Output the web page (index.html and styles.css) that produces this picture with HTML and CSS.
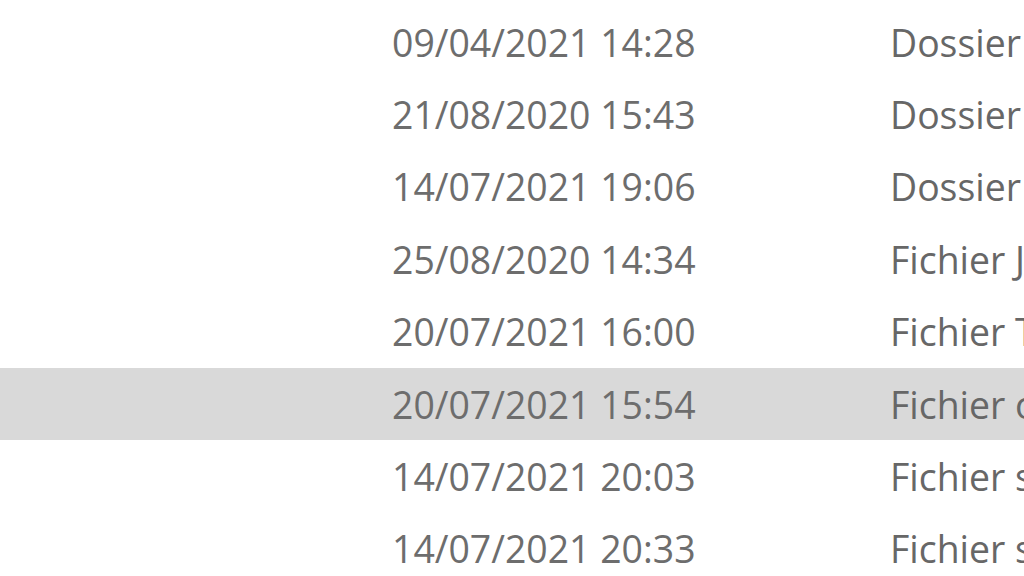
FILE: index.html
```html
<!DOCTYPE html>
<html lang="fr">
<head>
<meta charset="utf-8">
<title>Explorateur</title>
<link rel="stylesheet" href="styles.css">
</head>
<body>
<div class="list">
  <div class="row"><span class="name"></span><span class="date">09/04/2021 14:28</span><span class="type">Dossier de fichiers</span></div>
  <div class="row"><span class="name"></span><span class="date">21/08/2020 15:43</span><span class="type">Dossier de fichiers</span></div>
  <div class="row"><span class="name"></span><span class="date">14/07/2021 19:06</span><span class="type">Dossier de fichiers</span></div>
  <div class="row"><span class="name"></span><span class="date">25/08/2020 14:34</span><span class="type">Fichier JPG</span></div>
  <div class="row"><span class="name"></span><span class="date">20/07/2021 16:00</span><span class="type">Fichier TXT</span></div>
  <div class="row selected"><span class="name"></span><span class="date">20/07/2021 15:54</span><span class="type">Fichier ojet</span></div>
  <div class="row"><span class="name"></span><span class="date">14/07/2021 20:03</span><span class="type">Fichier source</span></div>
  <div class="row"><span class="name"></span><span class="date">14/07/2021 20:33</span><span class="type">Fichier source</span></div>
</div>
</body>
</html>
```
FILE: styles.css
```css
html, body {
  margin: 0;
  padding: 0;
  background: #ffffff;
  overflow: hidden;
  width: 1024px;
  height: 576px;
}

.list {
  padding-top: 6px;
  display: flex;
  flex-direction: column;
  font-family: "Open Sans", "Noto Sans", sans-serif;
  font-size: 37.4px;
  color: #6d6d6d;
}

.row {
  display: grid;
  grid-template-columns: 392px 498px 1fr;
  align-items: center;
  height: 72.4px;
  white-space: nowrap;
  overflow: hidden;
}

.row.selected {
  background: #d9d9d9;
}

.type {
  color: #676767;
}
```
